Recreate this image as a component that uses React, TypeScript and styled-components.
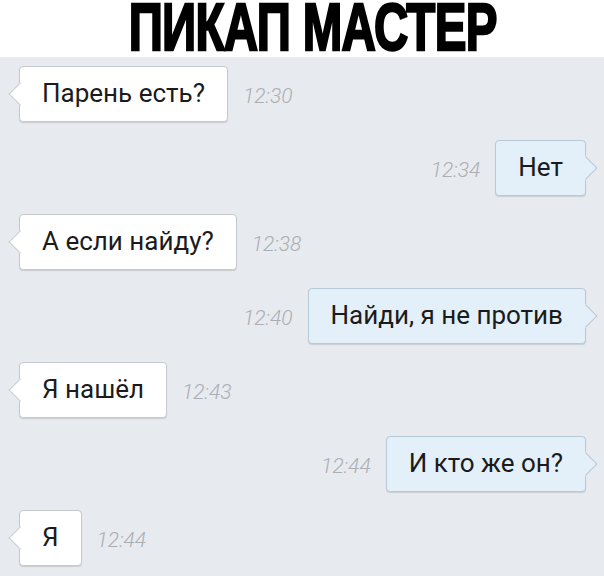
import React from "react";
import styled, { createGlobalStyle, css } from "styled-components";

const Global = createGlobalStyle`
  html, body { margin: 0; padding: 0; background: #ffffff; }
  body { font-family: Roboto, "Noto Sans", "Liberation Sans", sans-serif; }
`;

const Page = styled.div`
  width: 604px;
  height: 576px;
  overflow: hidden;
  display: flex;
  flex-direction: column;
  background: #e7eaee;
`;

const Header = styled.header`
  height: 57px;
  flex: none;
  background: #ffffff;
  display: flex;
  align-items: center;
  justify-content: center;
  padding-left: 22px;
  box-sizing: border-box;
`;

const Title = styled.h1`
  margin: 0;
  display: inline-block;
  font-family: "Liberation Sans", "DejaVu Sans", sans-serif;
  font-weight: 700;
  font-size: 50px;
  line-height: 57px;
  letter-spacing: -0.75px;
  color: #000;
  -webkit-text-stroke: 1.8px #000;
  transform: scale(0.95, 1.32);
  white-space: nowrap;
`;

const Chat = styled.main`
  flex: 1;
  display: flex;
  flex-direction: column;
  gap: 18px;
  padding: 9px 18px 0 19px;
`;

const Row = styled.div<{ $out?: boolean }>`
  display: flex;
  align-items: center;
  gap: 15px;
  justify-content: ${(p) => (p.$out ? "flex-end" : "flex-start")};
`;

const Bubble = styled.div<{ $out?: boolean }>`
  position: relative;
  box-sizing: border-box;
  height: 56px;
  display: flex;
  align-items: center;
  padding: 0 22px 2px;
  border-radius: 4px;
  font-size: 26px;
  color: #1b1b1b;
  white-space: nowrap;
  box-shadow: 0 1px 1px rgba(0, 0, 0, 0.12);
  ${(p) =>
    p.$out
      ? css`
          background: #e3f0fa;
          border: 1px solid #b8c9d8;
        `
      : css`
          background: #ffffff;
          border: 1px solid #c6cad0;
        `}

  &::before {
    content: "";
    position: absolute;
    top: 50%;
    width: 15px;
    height: 15px;
    background: inherit;
    border: inherit;
    border-radius: 0;
    ${(p) =>
      p.$out
        ? css`
            right: -8.5px;
            transform: translateY(-50%) rotate(45deg);
            border-left-color: transparent;
            border-bottom-color: transparent;
          `
        : css`
            left: -8.5px;
            transform: translateY(-50%) rotate(45deg);
            border-right-color: transparent;
            border-top-color: transparent;
          `}
  }
`;

const Time = styled.span`
  font-family: Roboto, "Liberation Sans", sans-serif;
  font-style: italic;
  font-weight: 300;
  font-size: 21px;
  color: #abafb5;
  margin-top: 4px;
`;

type Msg = { text: string; time: string; out?: boolean };

const messages: Msg[] = [
  { text: "Парень есть?", time: "12:30" },
  { text: "Нет", time: "12:34", out: true },
  { text: "А если найду?", time: "12:38" },
  { text: "Найди, я не против", time: "12:40", out: true },
  { text: "Я нашёл", time: "12:43" },
  { text: "И кто же он?", time: "12:44", out: true },
  { text: "Я", time: "12:44" },
];

export default function App() {
  return (
    <>
      <Global />
      <Page>
        <Header>
          <Title>ПИКАП МАСТЕР</Title>
        </Header>
        <Chat>
          {messages.map((m, i) =>
            m.out ? (
              <Row key={i} $out>
                <Time>{m.time}</Time>
                <Bubble $out>{m.text}</Bubble>
              </Row>
            ) : (
              <Row key={i}>
                <Bubble>{m.text}</Bubble>
                <Time>{m.time}</Time>
              </Row>
            )
          )}
        </Chat>
      </Page>
    </>
  );
}
